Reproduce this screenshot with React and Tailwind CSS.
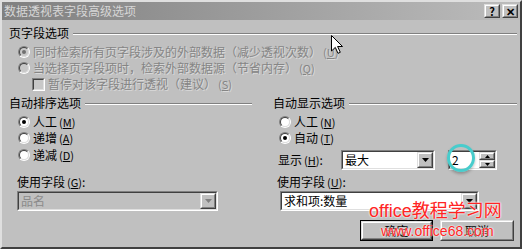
import React from "react";

const font = "font-['Noto_Sans_CJK_SC','Liberation_Sans',sans-serif]";

const Mn = ({ c }) => (
  <span className="ml-[2px] text-[11px]">
    (<u>{c}</u>)
  </span>
);

const Radio = ({ checked, disabled }) => (
  <span className="block w-[12px] h-[12px] shrink-0 rounded-full border border-t-[#808080] border-l-[#808080] border-r-white border-b-white">
    <span
      className={`flex w-full h-full items-center justify-center rounded-full border border-t-[#404040] border-l-[#404040] border-r-[#dfdfdf] border-b-[#dfdfdf] ${
        disabled ? "bg-[#c8c8c8]" : "bg-white"
      }`}
    >
      {checked && (
        <span className={`block w-[4px] h-[4px] rounded-full ${disabled ? "bg-[#707070]" : "bg-black"}`} />
      )}
    </span>
  </span>
);

const Sunken = ({ className = "", inner = "", children }) => (
  <div className={`border border-t-[#808080] border-l-[#808080] border-r-white border-b-white ${className}`}>
    <div className={`w-full h-full border border-t-[#404040] border-l-[#404040] border-r-[#dfdfdf] border-b-[#dfdfdf] ${inner}`}>
      {children}
    </div>
  </div>
);

const Raised = ({ className = "", children }) => (
  <div className={`border border-t-[#dfdfdf] border-l-[#dfdfdf] border-r-[#404040] border-b-[#404040] bg-[#c0c0c0] ${className}`}>
    <div className="w-full h-full flex items-center justify-center border border-t-white border-l-white border-r-[#808080] border-b-[#808080]">
      {children}
    </div>
  </div>
);

const Arrow = ({ disabled }) => (
  <svg width="7" height="4" viewBox="0 0 7 4">
    <path d="M0 0h7L3.5 4z" fill={disabled ? "#808080" : "#000"} />
  </svg>
);

const Combo = ({ text, disabled, width }) => (
  <Sunken className={`h-[20px] ${width}`} inner={`flex items-center ${disabled ? "bg-[#c0c0c0]" : "bg-white"}`}>
    <span className={`flex-1 pl-[2px] leading-[16px] ${disabled ? "text-[#8a8a8a]" : "text-black"}`}>{text}</span>
    <Raised className="w-[16px] h-[16px]">
      <Arrow disabled={disabled} />
    </Raised>
  </Sunken>
);

const Heading = ({ text, className = "" }) => (
  <div className={`flex items-center h-[14px] ${className}`}>
    <span className="leading-[14px]">{text}</span>
    <div className="flex-1 ml-[4px] mt-[2px] border-t border-t-[#808080] border-b border-b-white" />
  </div>
);

const Row = ({ children, className = "" }) => (
  <div className={`flex items-center h-[16px] ${className}`}>{children}</div>
);

export default function App() {
  return (
    <div
      className={`relative w-[522px] h-[249px] overflow-hidden bg-[#c0c0c0] text-[12px] text-black border-2 border-t-[#dfdfdf] border-l-[#dfdfdf] border-r-[#404040] border-b-[#404040] ${font}`}
    >
      {/* title bar */}
      <div className="flex items-center h-[18px] bg-linear-to-r from-[#808080] to-[#bcbcbc] pl-[2px] pr-[2px]">
        <span className="flex-1 text-[#d6d6d6] leading-[18px]">数据透视表字段高级选项</span>
        <Raised className="w-[16px] h-[14px] text-[11px] font-bold leading-none">?</Raised>
        <Raised className="w-[16px] h-[14px] ml-[2px] text-[11px] font-bold leading-none">✕</Raised>
      </div>

      <div className="pl-[7px] pr-[3px]">
        <Heading text="页字段选项" className="mt-[6px]" />
        <div className="text-[#858585] [text-shadow:1px_1px_0_#dadada]">
          <Row className="mt-[4px] pl-[9px] gap-[3px]">
            <Radio checked disabled />
            <span>
              同时检索所有页字段涉及的外部数据（减少透视次数）<Mn c="U" />
            </span>
          </Row>
          <Row className="pl-[9px] gap-[3px]">
            <Radio disabled />
            <span>
              当选择页字段项时，检索外部数据源（节省内存）<Mn c="Q" />
            </span>
          </Row>
          <Row className="pl-[23px] gap-[3px]">
            <Sunken className="w-[13px] h-[13px]" inner="bg-[#c8c8c8]" />
            <span>
              暂停对该字段进行透视（建议）<Mn c="S" />
            </span>
          </Row>
        </div>

        <div className="grid grid-cols-[264px_1fr] mt-[4px]">
          {/* left column */}
          <div>
            <Heading text="自动排序选项" className="w-[243px]" />
            <Row className="mt-[4px] pl-[9px] gap-[3px]">
              <Radio checked />
              <span>
                人工<Mn c="M" />
              </span>
            </Row>
            <Row className="pl-[9px] gap-[3px]">
              <Radio />
              <span>
                递增<Mn c="A" />
              </span>
            </Row>
            <Row className="mt-[1px] pl-[9px] gap-[3px]">
              <Radio />
              <span>
                递减<Mn c="D" />
              </span>
            </Row>
            <div className="mt-[12px] ml-[8px] h-[14px] leading-[14px]">
              使用字段<Mn c="G" />:
            </div>
            <div className="mt-[2px] ml-[8px]">
              <Combo text="品名" disabled width="w-[201px]" />
            </div>
          </div>

          {/* right column */}
          <div>
            <Heading text="自动显示选项" />
            <Row className="mt-[4px] pl-[6px] gap-[3px]">
              <Radio />
              <span>
                人工<Mn c="N" />
              </span>
            </Row>
            <Row className="pl-[6px] gap-[3px]">
              <Radio checked />
              <span>
                自动<Mn c="T" />
              </span>
            </Row>
            <div className="flex items-center h-[20px] mt-[4px] pl-[5px]">
              <span className="w-[63px]">
                显示<Mn c="H" />:
              </span>
              <Combo text="最大" width="w-[94px]" />
              <Sunken className="w-[49px] h-[20px] ml-[13px]" inner="flex items-center bg-white">
                <span className="flex-1 pl-[2px] leading-[16px]">2</span>
                <div className="flex flex-col w-[16px] h-[16px]">
                  <Raised className="w-[16px] h-[8px]">
                    <svg width="5" height="3" viewBox="0 0 5 3">
                      <path d="M0 3h5L2.5 0z" fill="#000" />
                    </svg>
                  </Raised>
                  <Raised className="w-[16px] h-[8px]">
                    <svg width="5" height="3" viewBox="0 0 5 3">
                      <path d="M0 0h5L2.5 3z" fill="#000" />
                    </svg>
                  </Raised>
                </div>
              </Sunken>
            </div>
            <div className="mt-[5px] ml-[4px] h-[14px] leading-[14px]">
              使用字段<Mn c="U" />:
            </div>
            <div className="mt-[2px] ml-[7px]">
              <Combo text="求和项:数量" width="w-[199px]" />
            </div>
            <div className="flex mt-[9px] ml-[87px] gap-[7px]">
              <div className="border border-black">
                <Raised className="w-[71px] h-[19px]">确定</Raised>
              </div>
              <Raised className="w-[74px] h-[21px]">取消</Raised>
            </div>
          </div>
        </div>
      </div>

      {/* cyan highlight circle around the spin value */}
      <div className="absolute left-[445px] top-[142px] w-[28px] h-[28px] rounded-full border-[3px] border-[#48cccc] shadow-[0_2px_3px_rgba(0,0,0,0.25)]" />

      {/* mouse pointer */}
      <svg className="absolute left-[329px] top-[33px]" width="12" height="19" viewBox="0 0 12 19">
        <path d="M0.5 0.5V16L4.3 12.4L7 18.3L9.3 17.3L6.6 11.5H11.5Z" fill="#fff" stroke="#000" strokeWidth="1" />
      </svg>

      {/* watermark */}
      <div className="absolute left-[367px] top-[199px] flex flex-col items-start text-[#ff2424] font-['Liberation_Sans','Noto_Sans_CJK_SC',sans-serif] [text-shadow:0_0_2px_#fff,0_0_2px_#fff]">
        <span className="text-[18px] leading-[20px]">office教程学习网</span>
        <span className="ml-[12px] mt-[2px] text-[14px] leading-[16px]">www.office68.com</span>
      </div>
    </div>
  );
}
